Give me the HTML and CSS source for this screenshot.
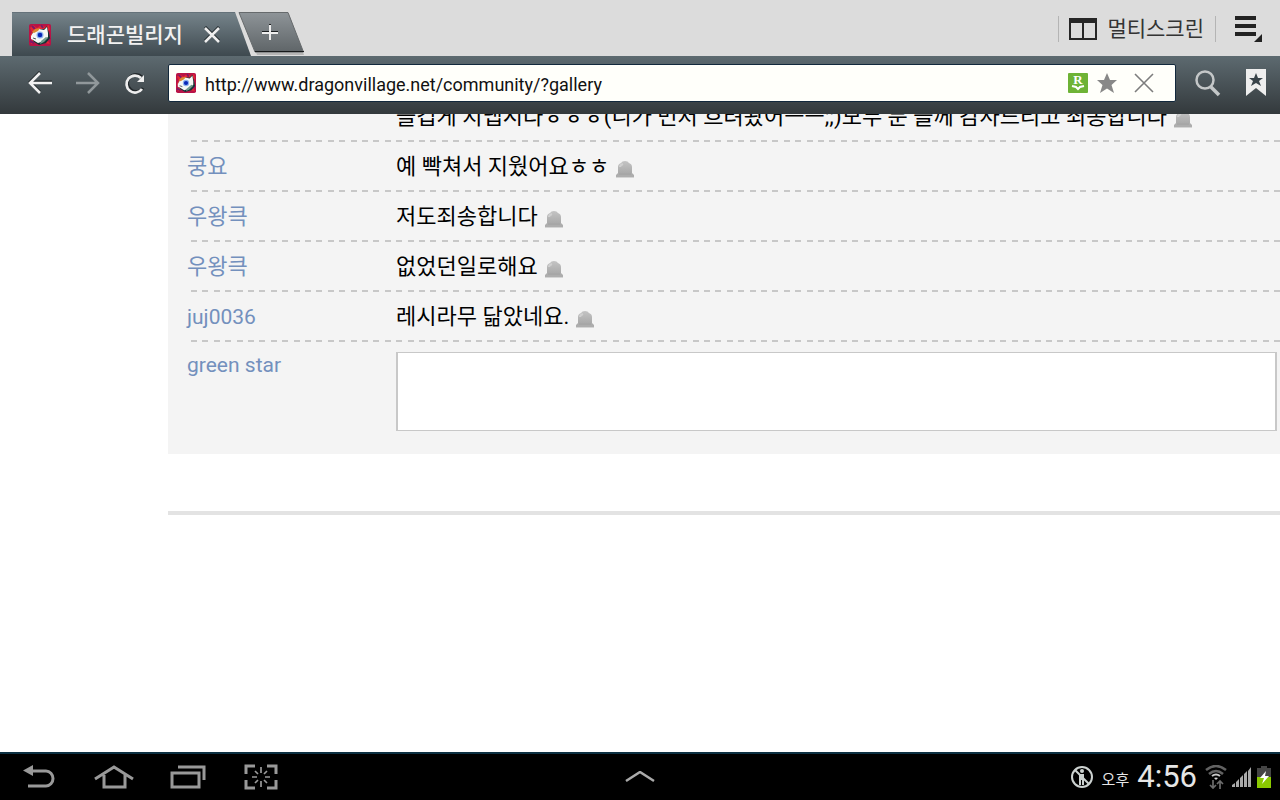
FILE: index.html
```html
<!DOCTYPE html>
<html lang="ko">
<head>
  <meta charset="UTF-8" />
  <meta name="viewport" content="width=device-width, initial-scale=1.0"/>
  <title>드래곤빌리지</title>
  <link rel="stylesheet" href="styles.css">
</head>
<body>
  <!-- shared icons -->
  <svg class="defs" width="0" height="0" aria-hidden="true">
    <defs>
      <linearGradient id="tabGray" x1="0" y1="0" x2="0" y2="1">
        <stop offset="0" stop-color="#8e9498"/>
        <stop offset="1" stop-color="#5f6568"/>
      </linearGradient>
      <linearGradient id="bellGray" x1="0" y1="0" x2="0" y2="1">
        <stop offset="0" stop-color="#c4c4c4"/>
        <stop offset="1" stop-color="#a8a8a8"/>
      </linearGradient>
    </defs>
    <symbol id="dragon" viewBox="0 0 22 22">
      <rect width="22" height="22" rx="2" fill="#b81446"/>
      <path d="M1 4l3-3 4 3 4-3 4 2 4-2 1 5-3 3 3 4-2 4 2 3-5-1-4 1-5-2-5 2 1-5-2-3 2-4z" fill="#e62632"/>
      <path d="M3 2l3 3M1 17l4 2M17 17l4-3M12 1l2 3" stroke="#7c1868" stroke-width="2"/>
      <path d="M2 13L4 8l5-3 6 0 3-3 2 7 1 5-4 5-7 2-5-3-2-3z" fill="#163436"/>
      <path d="M2 12l3-5 5-2 5 1 3-3 1 6v4l-4 4-6 2-5-3-2-1z" fill="#f5f8f5"/>
      <path d="M3 8l3-3 5-1-2 3-4 2z" fill="#d98a32"/>
      <path d="M12 17l5-4 2 1-4 4-4 2z" fill="#6f9b8d"/>
      <circle cx="11" cy="11" r="3.500" fill="#8cb2ee"/>
      <circle cx="11" cy="11" r="2.300" fill="#0827b8"/>
      <path d="M4 14l3 1" stroke="#555" stroke-width="1"/>
    </symbol>
    <symbol id="bell" viewBox="0 0 20 20">
      <path d="M3 15V8q0-3 3-4 1-2 4-2t4 2q3 1 3 4v7z" fill="url(#bellGray)"/>
      <path d="M5 8q0-2 3-3" fill="none" stroke="#d0d0d0" stroke-width="2"/>
      <path d="M3 14h14l2 2v2H1v-2z" fill="#adadad"/>
      <path d="M4 15h12" stroke="#a0a0a0" stroke-width="1"/>
      <path d="M1 18.500h18" stroke="#d4d4d4" stroke-width="1"/>
    </symbol>
  </svg>

  <!-- TABS -->
  <header class="tabs">
    <div class="tab">
      <svg class="tab-icon" width="22" height="22"><use href="#dragon"/></svg>
      <span class="tab-title">드래곤빌리지</span>
      <button class="icon-button" aria-label="탭 닫기">
        <svg width="18" height="18" viewBox="0 0 18 18"><path d="M2 1l14 14M16 1L2 15" stroke="#20282c" stroke-width="3"/><path d="M2 2l14 14M16 2L2 16" stroke="#eee" stroke-width="2.500"/></svg>
      </button>
    </div>
    <button class="icon-button new-tab" aria-label="새 탭">
      <svg width="70" height="46" viewBox="0 0 70 46">
        <path d="M3 2h48l15 41H19z" fill="#b5b5b5"/>
        <path d="M1 .5h49L65.500 40H17z" fill="url(#tabGray)" stroke="#666a6c"/>
        <path d="M17 39.500h49" stroke="#16191a"/>
        <path d="M24 20h16M32 12v16" stroke="#1d2022" stroke-width="2"/>
        <path d="M24 21h16M32 13v15" stroke="#eee" stroke-width="2"/>
      </svg>
    </button>
    <div class="tools">
      <button class="multi">
        <svg width="28" height="22" viewBox="0 0 28 22"><path d="M1 1h26v20H1zM14 4v17" fill="none" stroke="#262626" stroke-width="2"/><path d="M0 0h28v5H0z" fill="#262626"/></svg>
        멀티스크린
      </button>
      <button class="icon-button menu" aria-label="메뉴">
        <svg width="28" height="26" viewBox="0 0 28 26"><path d="M0 2h21M0 10h21M0 18h21" stroke="#222" stroke-width="4"/><path d="M27 18v8h-8z" fill="#222"/></svg>
      </button>
    </div>
  </header>

  <!-- ADDRESS BAR -->
  <nav class="toolbar">
    <div class="nav-buttons">
      <button class="icon-button" aria-label="뒤로">
        <svg width="24" height="24" viewBox="0 0 24 24"><path d="M12 1L2 11l10 10M2 11h22" fill="none" stroke="#22282b" stroke-width="3"/><path d="M12 2L2 12l10 10M2 12h22" fill="none" stroke="#f0f0f0" stroke-width="2.500"/></svg>
      </button>
      <button class="icon-button" aria-label="앞으로">
        <svg width="24" height="24" viewBox="0 0 24 24"><path d="M12 2l10 10-10 10M22 12H0" fill="none" stroke="#91989b" stroke-width="2.500"/></svg>
      </button>
      <button class="icon-button" aria-label="새로고침">
        <svg width="24" height="24" viewBox="0 0 24 24"><path d="M18 6a8.500 8.500 0 1 0 1 11" fill="none" stroke="#22282b" stroke-width="3"/><path d="M17 7a8.500 8.500 0 1 0 1 11" fill="none" stroke="#eee" stroke-width="2.700"/><path d="M20 4v7h-7z" fill="#eee"/></svg>
      </button>
    </div>
    <div class="address">
      <svg width="20" height="20"><use href="#dragon"/></svg>
      <input class="url" type="text" aria-label="주소" value="http://www.dragonvillage.net/community/?gallery">
      <button class="icon-button" aria-label="리더">
        <svg width="20" height="20" viewBox="0 0 20 20"><rect width="20" height="20" rx="1" fill="#6eb335"/><text x="10" y="11" class="reader-letter">R</text><path d="M4 13l4 1 2 2 2-2 4-1" fill="none" stroke="#fff" stroke-width="2"/></svg>
      </button>
      <button class="icon-button" aria-label="즐겨찾기">
        <svg width="20" height="20" viewBox="0 0 20 20"><path d="M10 0l3 7h7l-5.500 5L17 20l-7-4.500L3 20l2.500-8L0 7h7z" fill="#888"/></svg>
      </button>
      <button class="icon-button clear" aria-label="지우기">
        <svg width="20" height="20" viewBox="0 0 20 20"><path d="M1 1l18 18M19 1L1 19" stroke="#7d7d7d" stroke-width="1.600"/></svg>
      </button>
    </div>
    <div class="side-buttons">
      <button class="icon-button" aria-label="검색">
        <svg width="26" height="28" viewBox="0 0 26 28"><circle cx="10" cy="11" r="8.500" fill="none" stroke="#c4c7c8" stroke-width="2.500"/><path d="M16 18l8 8" stroke="#c4c7c8" stroke-width="3.500"/></svg>
      </button>
      <button class="icon-button" aria-label="북마크">
        <svg width="20" height="28" viewBox="0 0 20 28"><path d="M0 0h20v27l-10-8-10 8z" fill="#eee"/><path d="M10 4l2 5h5l-4 3 2 5-5-3-5 3 2-5-4-3h5z" fill="#39444a"/></svg>
      </button>
    </div>
  </nav>

  <!-- PAGE -->
  <main class="page">
    <section class="comments">
      <ul class="comment-list">
        <li class="comment">
          <a class="name" href="#"></a>
          <p class="text">즐겁게 지냅시다ㅎㅎㅎ(니가 먼저 흐려놨어ㅡㅡ;;)모두 분 들께 감사드리고 죄송합니다</p>
          <button class="icon-button bell" aria-label="신고"><svg width="20" height="20"><use href="#bell"/></svg></button>
        </li>
        <li class="comment">
          <a class="name" href="#">쿵요</a>
          <p class="text">예 빡쳐서 지웠어요ㅎㅎ</p>
          <button class="icon-button bell" aria-label="신고"><svg width="20" height="20"><use href="#bell"/></svg></button>
        </li>
        <li class="comment">
          <a class="name" href="#">우왕큭</a>
          <p class="text">저도죄송합니다</p>
          <button class="icon-button bell" aria-label="신고"><svg width="20" height="20"><use href="#bell"/></svg></button>
        </li>
        <li class="comment">
          <a class="name" href="#">우왕큭</a>
          <p class="text">없었던일로해요</p>
          <button class="icon-button bell" aria-label="신고"><svg width="20" height="20"><use href="#bell"/></svg></button>
        </li>
        <li class="comment">
          <a class="name latin" href="#">juj0036</a>
          <p class="text">레시라무 닮았네요.</p>
          <button class="icon-button bell" aria-label="신고"><svg width="20" height="20"><use href="#bell"/></svg></button>
        </li>
      </ul>
      <form class="reply">
        <label class="name latin" for="reply">green star</label>
        <textarea id="reply" class="reply-box"></textarea>
      </form>
    </section>
    <hr class="divider">
  </main>

  <!-- SYSTEM BAR -->
  <footer class="system">
    <div class="keys">
      <button class="icon-button" aria-label="뒤로">
        <svg width="36" height="26" viewBox="0 0 36 26"><path d="M8 7h16a7 7.500 0 0 1 0 15H6" fill="none" stroke="#999" stroke-width="3"/><path d="M11 1v11L1 6.500z" fill="#999"/></svg>
      </button>
      <button class="icon-button" aria-label="홈">
        <svg width="40" height="26" viewBox="0 0 40 26"><path d="M1 15L20 3l19 12M10 11v12h21V11" fill="none" stroke="#999" stroke-width="3"/></svg>
      </button>
      <button class="icon-button" aria-label="최근 앱">
        <svg width="38" height="26" viewBox="0 0 38 26"><path d="M2 9h27v14H2zM8 3h26v13" fill="none" stroke="#999" stroke-width="3"/></svg>
      </button>
      <button class="icon-button" aria-label="화면 캡처">
        <svg width="34" height="26" viewBox="0 0 34 26"><path d="M2 10V2h9M23 2h9v8M2 16v8h9M32 16v8h-9" fill="none" stroke="#999" stroke-width="3"/><path d="M17 3v6M17 17v6M8 13h5M21 13h5M11 7l3 3M23 7l-3 3M11 19l3-3M23 19l-3-3" stroke="#999" stroke-width="1.700"/></svg>
      </button>
    </div>
    <button class="icon-button" aria-label="열기">
      <svg width="30" height="12" viewBox="0 0 30 12"><path d="M1 10L15 1l14 9" fill="none" stroke="#aaa" stroke-width="2.500"/></svg>
    </button>
    <div class="status">
      <svg width="22" height="22" viewBox="0 0 22 22"><circle cx="11" cy="11" r="10" fill="none" stroke="#ccd2d0" stroke-width="2"/><circle cx="11" cy="5" r="2" fill="#ccd2d0"/><path d="M8 8h5v11h-2v-5h-1v5H8z" fill="#ccd2d0"/><path d="M4 4l14 14" stroke="#ccd2d0" stroke-width="2"/></svg>
      <span class="ampm">오후</span>
      <time class="clock">4:56</time>
      <svg width="22" height="24" viewBox="0 0 22 24"><path d="M1 5q10-8 20 0M4 9q7-6 14 0" fill="none" stroke="#626262" stroke-width="2.500"/><path d="M7 11q4-3 8 0" fill="none" stroke="#c8c8c8" stroke-width="2"/><path d="M9 13q2-1 4 0l-2 2z" fill="#d2d2d2"/><path d="M8 15v7M5 20l3 3 3-3M15 24v-8M12 19l3-3 3 3" fill="none" stroke="#6c6c6c" stroke-width="1.700"/></svg>
      <svg width="20" height="20" viewBox="0 0 20 20"><path d="M0 20v-2l3-2v4zM4 20v-5l3-3v8zM8 20v-9l3-3v12zM12 20V7l3-3v16zM16 20V4l3-4v20z" fill="#a9a9a9"/></svg>
      <svg width="14" height="22" viewBox="0 0 14 22"><path d="M4 0h6v2h4v20H0V2h4z" fill="#454545"/><path d="M0 11h14v11H0z" fill="#8ac900"/><path d="M9 5L3 12h4l-2 6 7-8H8z" fill="#fff"/></svg>
    </div>
  </footer>
</body>
</html>
```
FILE: styles.css
```css
* {
  box-sizing: border-box;
}

body {
  margin: 0;
  min-height: 100vh;
  display: flex;
  flex-direction: column;
  background: #fff;
  color: #000;
  font-family: Roboto, "Noto Sans CJK KR", sans-serif;
  overflow-x: hidden;
}

svg {
  display: block;
  flex: none;
}

.defs {
  position: absolute;
}

button {
  padding: 0;
  border: none;
  background: none;
  font-family: inherit;
  cursor: pointer;
}

.icon-button {
  flex: none;
}

/* TABS */
.tabs {
  display: flex;
  align-items: flex-start;
  height: 56px;
  padding: 12px 17px 0 12px;
  background: #dcdcdc;
}

.tab {
  display: flex;
  align-items: center;
  width: 239px;
  height: 44px;
  padding-left: 17px;
  background: linear-gradient(#75838a, #3e494f);
  border-top: 1px solid #65727a;
  clip-path: polygon(0 0, 223px 0, 100% 100%, 0 100%);
}

.tab-title {
  margin: 0 20px 0 16px;
  color: #f2f2f2;
  font-size: 21px;
  font-weight: 500;
  line-height: 30px;
  white-space: nowrap;
}

.new-tab {
  margin-left: -13px;
}

.tools {
  display: flex;
  align-items: center;
  margin-left: auto;
}

.multi {
  display: flex;
  align-items: center;
  gap: 10px;
  height: 26px;
  margin-top: 3px;
  padding: 0 11px 0 10px;
  border-left: 1px solid #b4b4b4;
  border-right: 1px solid #b4b4b4;
  color: #333;
  font-size: 21px;
  line-height: 26px;
  white-space: nowrap;
}

.menu {
  margin: 4px 0 0 19px;
}

/* ADDRESS BAR */
.toolbar {
  display: flex;
  align-items: center;
  height: 58px;
  padding: 0 14px 4px 28px;
  background: linear-gradient(#5d6a70, #33393c);
}

.nav-buttons {
  display: flex;
  gap: 24px;
  width: 140px;
}

.address {
  flex: 1;
  display: flex;
  align-items: center;
  gap: 9px;
  height: 38px;
  padding: 0 21px 0 7px;
  background: #fffffa;
  border: 1px solid #12283c;
  border-radius: 2px;
}

.url {
  flex: 1;
  min-width: 0;
  padding: 3px 0 0;
  border: none;
  outline: none;
  background: none;
  color: #111;
  font-family: inherit;
  font-size: 18px;
  line-height: 24px;
}

.clear {
  margin-left: 8px;
}

.side-buttons {
  display: flex;
  align-items: center;
  gap: 25px;
  margin-left: 19px;
}

.reader-letter {
  fill: #fff;
  font-family: "Liberation Serif", serif;
  font-size: 13px;
  font-weight: bold;
  text-anchor: middle;
}

/* PAGE */
.page {
  flex: 1;
  padding-left: 168px;
  overflow: hidden;
}

.comments {
  margin-top: -22px;
  padding-bottom: 23px;
  background: #f4f4f4;
}

.comment-list {
  margin: 0;
  padding: 0;
  list-style: none;
}

.comment {
  display: flex;
  align-items: center;
  height: 50px;
  padding-left: 19px;
  /* five dashes every 57px */
  background: repeating-linear-gradient(90deg,
    #c8c8c8 0 6px, transparent 6px 11px,
    #c8c8c8 11px 17px, transparent 17px 23px,
    #c8c8c8 23px 29px, transparent 29px 34px,
    #c8c8c8 34px 40px, transparent 40px 46px,
    #c8c8c8 46px 52px, transparent 52px 57px) 23px 100% / 100% 2px no-repeat;
}

.name {
  flex: none;
  width: 209px;
  color: #7390bd;
  font-size: 22px;
  line-height: 30px;
  text-decoration: none;
}

.latin {
  font-size: 21px;
  line-height: 26px;
}

.text {
  margin: 0;
  font-size: 22px;
  line-height: 30px;
  white-space: nowrap;
}

.bell {
  margin: 4px 0 0 6px;
}

.reply {
  display: flex;
  align-items: flex-start;
  padding: 10px 3px 0 19px;
}

.reply-box {
  flex: 1;
  height: 79px;
  padding: 4px;
  border: 1px solid #c8c8c8;
  border-width: 1px 2px;
  border-radius: 0;
  outline: none;
  background: #fff;
  font-family: inherit;
  font-size: 21px;
  resize: none;
}

.divider {
  height: 4px;
  margin: 57px 0 0;
  border: none;
  background: #e3e3e3;
}

/* SYSTEM BAR */
.system {
  display: grid;
  grid-template-columns: 1fr auto 1fr;
  align-items: center;
  height: 48px;
  padding: 0 9px;
  background: #000;
  border-top: 2px solid #0c3042;
}

.keys {
  display: flex;
  gap: 36px;
  padding-left: 13px;
}

.status {
  display: flex;
  align-items: center;
  justify-content: flex-end;
  gap: 5px;
  color: #e6e6e6;
}

.ampm {
  margin: 6px 0 0 4px;
  font-size: 15px;
  line-height: 20px;
}

.clock {
  margin: 0 3px;
  font-size: 31px;
  line-height: 36px;
}
```
